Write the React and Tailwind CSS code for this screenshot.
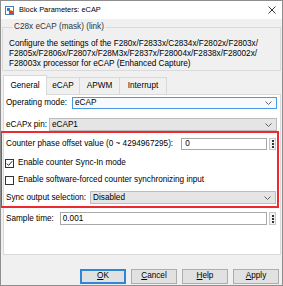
import React from "react";

const Chevron = () => (
    <svg width="7" height="4" viewBox="0 0 7 4" className="shrink-0">
        <polyline points="0.5,0.5 3.5,3.5 6.5,0.5" fill="none" stroke="#606060" strokeWidth="1" />
    </svg>
);

const Dropdown = ({ value, className }) => (
    <div className={"flex-1 flex items-center justify-between pl-[2px] pr-[4px] border " + className}>
        <span>{value}</span>
        <Chevron />
    </div>
);

const Dots = () => (
    <div className="w-[7px] h-full ml-[2px] flex flex-col items-center justify-center gap-[1px] border border-[#c8c8c8] bg-[#f3f3f3]">
        <span className="w-[2px] h-[2px] bg-[#333]"></span>
        <span className="w-[2px] h-[2px] bg-[#333]"></span>
        <span className="w-[2px] h-[2px] bg-[#333]"></span>
    </div>
);

const Checkbox = ({ checked }) => (
    <div className="w-[9px] h-[9px] border border-[#333] bg-white flex items-center justify-center">
        {checked && (
            <svg width="7" height="7" viewBox="0 0 7 7">
                <polyline points="0.8,3.6 2.6,5.4 6.2,1.2" fill="none" stroke="#222" strokeWidth="1" />
            </svg>
        )}
    </div>
);

const Button = ({ first, rest, primary }) => (
    <button
        className={
            "w-[46px] h-[15px] flex items-center justify-center leading-none " +
            (primary ? "border-2 border-[#2f86d6] bg-[#e1e1e1]" : "border border-[#adadad] bg-[#e1e1e1]")
        }>
        <span className="underline underline-offset-[1px]">{first}</span>
        <span>{rest}</span>
    </button>
);

export default function App() {
    return (
        <div className="w-[283px] h-[286px] border border-[#8e8e8e] bg-[#f0f0f0] flex flex-col text-[8.2px] leading-[12px] text-black font-['Liberation_Sans',Arial,sans-serif] overflow-hidden">
            {/* title bar */}
            <div className="h-[18px] bg-white flex items-center pl-[4px] pr-[6px] shrink-0 text-[7.4px]">
                <svg width="9" height="9" viewBox="0 0 9 9">
                    <rect x="0.5" y="0.5" width="8" height="8" fill="#fff" stroke="#4a7fb5" />
                    <rect x="2" y="2" width="3" height="3" fill="#3a7bc8" />
                    <rect x="4" y="5" width="4" height="3" fill="#d9412b" />
                    <rect x="5" y="4" width="2" height="1" fill="#f0a030" />
                </svg>
                <span className="ml-[5px]">Block Parameters: eCAP</span>
                <svg width="8" height="8" viewBox="0 0 8 8" className="ml-auto">
                    <path d="M0.5 0.5 L7.5 7.5 M7.5 0.5 L0.5 7.5" stroke="#222" strokeWidth="0.9" />
                </svg>
            </div>

            {/* mask description */}
            <fieldset className="mx-[1px] mt-[2px] border border-[#dadada] pl-[6px] pr-[2px] pb-[1px] shrink-0">
                <legend className="ml-[4px] px-[1px] leading-[12px] text-[#333]">C28x eCAP (mask) (link)</legend>
                <p className="leading-[10px] mt-[6px] whitespace-nowrap">
                    Configure the settings of the F280x/F2833x/C2834x/F2802x/F2803x/
                    <br />
                    F2805x/F2806x/F2807x/F28M3x/F2837x/F28004x/F2838x/F28002x/
                    <br />
                    F28003x processor for eCAP (Enhanced Capture)
                </p>
            </fieldset>

            {/* tabs */}
            <div className="flex items-end ml-[2px] mt-[4px] h-[20px] relative z-10 shrink-0">
                <div className="w-[44px] h-[20px] bg-white border border-b-0 border-[#d9d9d9] flex items-center justify-center">General</div>
                <div className="w-[33px] h-[17px] mb-[1px] border border-l-0 border-b-0 border-[#d9d9d9] flex items-center justify-center">eCAP</div>
                <div className="w-[40px] h-[17px] mb-[1px] border border-l-0 border-b-0 border-[#d9d9d9] flex items-center justify-center">APWM</div>
                <div className="w-[47px] h-[17px] mb-[1px] border border-l-0 border-b-0 border-[#d9d9d9] flex items-center justify-center">Interrupt</div>
            </div>

            {/* tab panel */}
            <div className="ml-[2px] mr-[1px] -mt-[1px] h-[161px] bg-white border border-[#d9d9d9] flex flex-col shrink-0">
                <div className="flex items-center h-[12px] mt-[2px] pl-[2px] pr-[3px]">
                    <span className="mr-[5px]">Operating mode:</span>
                    <Dropdown value="eCAP" className="h-full border-[#4a98e0] bg-[#f7fbff]" />
                </div>
                <div className="flex items-center h-[13px] mt-[9px] pl-[2px] pr-[3px]">
                    <span className="mr-[2px]">eCAPx pin:</span>
                    <Dropdown value="eCAP1" className="h-full border-[#bcbcbc] bg-[#e5e5e5]" />
                </div>

                {/* highlighted parameters */}
                <div className="-ml-[4px] mr-[1px] border-2 border-[#ec2a30] flex flex-col">
                    <div className="flex items-center h-[12px] mt-[5px] pl-[4px] pr-[1px]">
                        <span className="mr-[8px]">Counter phase offset value (0 ~ 4294967295):</span>
                        <div className="flex-1 h-full border border-[#a8a8a8] bg-white flex items-center pl-[3px]">0</div>
                        <Dots />
                    </div>
                    <div className="flex items-center h-[10px] mt-[8px] pl-[3px]">
                        <Checkbox checked />
                        <span className="ml-[4px]">Enable counter Sync-In mode</span>
                    </div>
                    <div className="flex items-center h-[10px] mt-[7px] pl-[3px]">
                        <Checkbox />
                        <span className="ml-[4px]">Enable software-forced counter synchronizing input</span>
                    </div>
                    <div className="flex items-center h-[13px] mt-[6px] mb-[2px] pl-[4px] pr-[1px]">
                        <span className="mr-[4px]">Sync output selection:</span>
                        <Dropdown value="Disabled" className="h-full border-[#bcbcbc] bg-[#e5e5e5]" />
                    </div>
                </div>

                <div className="flex items-center h-[13px] mt-[4px] pl-[2px] pr-[4px]">
                    <span className="mr-[6px]">Sample time:</span>
                    <div className="flex-1 h-full border border-[#a8a8a8] bg-white flex items-center pl-[2px]">0.001</div>
                    <Dots />
                </div>
            </div>

            {/* buttons */}
            <div className="flex justify-end gap-[5px] pr-[3px] mt-[14px] shrink-0">
                <Button first="O" rest="K" primary />
                <Button first="C" rest="ancel" />
                <Button first="H" rest="elp" />
                <Button first="A" rest="pply" />
            </div>
        </div>
    );
}
